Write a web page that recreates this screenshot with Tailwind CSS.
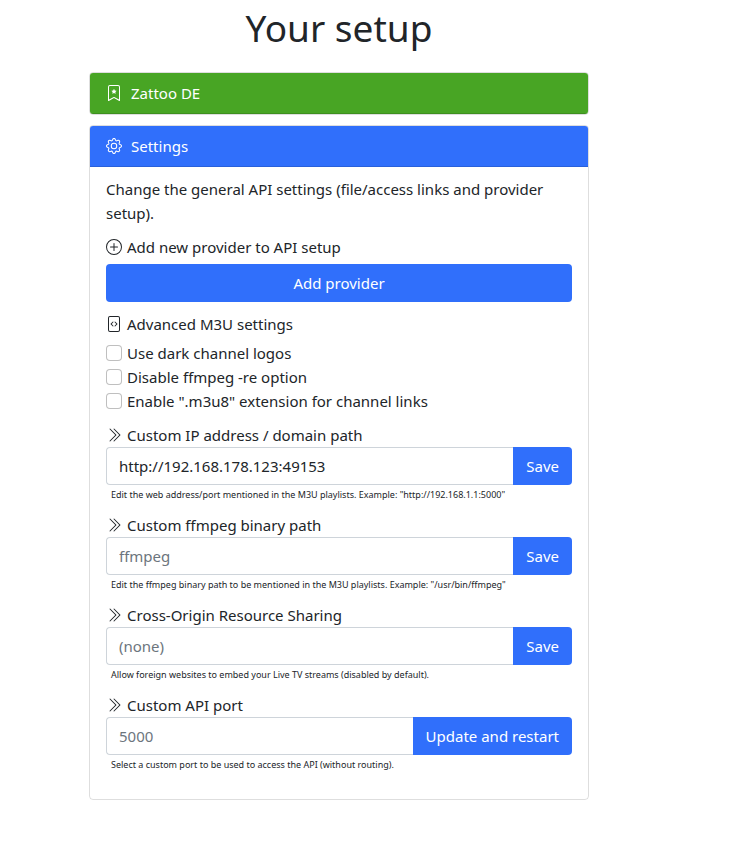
<!DOCTYPE html>
<html lang="en">
<head>
    <meta charset="UTF-8">
    <meta name="viewport" content="width=device-width, initial-scale=1.0">
    <title>Your setup</title>
    <script src="https://cdn.jsdelivr.net/npm/@tailwindcss/browser@4"></script>
</head>
<body class="bg-white pr-[53px] font-['Noto_Sans',sans-serif] text-[15px] leading-6 text-[#212529]">
    <main class="mx-auto max-w-[500px] pb-6">
        <h1 class="mb-5 pt-1 text-center text-[37px] leading-12">Your setup</h1>

        <!-- Provider -->
        <div class="mb-[10px] overflow-hidden rounded border border-black/13">
            <div class="flex items-center gap-[9px] border-b border-black/13 bg-[#48a524] px-4 py-2 text-white">
                <svg class="h-4 w-4" viewBox="0 0 16 16" fill="currentColor">
                    <path d="M7.84 4.1a.178.178 0 0 1 .32 0l.634 1.285a.178.178 0 0 0 .134.098l1.42.206c.145.021.204.2.098.303L9.42 6.993a.178.178 0 0 0-.051.158l.242 1.414a.178.178 0 0 1-.258.187l-1.27-.668a.178.178 0 0 0-.165 0l-1.27.668a.178.178 0 0 1-.257-.187l.242-1.414a.178.178 0 0 0-.05-.158l-1.03-1.001a.178.178 0 0 1 .098-.303l1.42-.206a.178.178 0 0 0 .134-.098L7.84 4.1z" />
                    <path d="M2 2a2 2 0 0 1 2-2h8a2 2 0 0 1 2 2v13.5a.5.5 0 0 1-.777.416L8 13.101l-5.223 2.815A.5.5 0 0 1 2 15.5V2zm2-1a1 1 0 0 0-1 1v12.566l4.723-2.482a.5.5 0 0 1 .554 0L13 14.566V2a1 1 0 0 0-1-1H4z" />
                </svg>
                <span>Zattoo DE</span>
            </div>
        </div>

        <!-- Settings -->
        <div class="overflow-hidden rounded border border-black/13">
            <div class="flex items-center gap-[9px] border-b border-black/13 bg-[#306ffb] px-4 py-2 text-white">
                <svg class="h-4 w-4" viewBox="0 0 16 16" fill="currentColor">
                    <path d="M8 4.754a3.246 3.246 0 1 0 0 6.492 3.246 3.246 0 0 0 0-6.492zM5.754 8a2.246 2.246 0 1 1 4.492 0 2.246 2.246 0 0 1-4.492 0z" />
                    <path d="M9.796 1.343c-.527-1.79-3.065-1.79-3.592 0l-.094.319a.873.873 0 0 1-1.255.52l-.292-.16c-1.64-.892-3.433.902-2.54 2.541l.159.292a.873.873 0 0 1-.52 1.255l-.319.094c-1.79.527-1.79 3.065 0 3.592l.319.094a.873.873 0 0 1 .52 1.255l-.16.292c-.892 1.64.901 3.434 2.541 2.54l.292-.159a.873.873 0 0 1 1.255.52l.094.319c.527 1.79 3.065 1.79 3.592 0l.094-.319a.873.873 0 0 1 1.255-.52l.292.16c1.64.893 3.434-.902 2.54-2.541l-.159-.292a.873.873 0 0 1 .52-1.255l.319-.094c1.79-.527 1.79-3.065 0-3.592l-.319-.094a.873.873 0 0 1-.52-1.255l.16-.292c.893-1.64-.902-3.433-2.541-2.54l-.292.159a.873.873 0 0 1-1.255-.52l-.094-.319zm-2.633.283c.246-.835 1.428-.835 1.674 0l.094.319a1.873 1.873 0 0 0 2.693 1.115l.291-.16c.764-.415 1.6.42 1.184 1.185l-.159.292a1.873 1.873 0 0 0 1.116 2.692l.318.094c.835.246.835 1.428 0 1.674l-.319.094a1.873 1.873 0 0 0-1.115 2.693l.16.291c.415.764-.42 1.6-1.185 1.184l-.291-.159a1.873 1.873 0 0 0-2.693 1.116l-.094.318c-.246.835-1.428.835-1.674 0l-.094-.319a1.873 1.873 0 0 0-2.692-1.115l-.292.16c-.764.415-1.6-.42-1.184-1.185l.159-.291A1.873 1.873 0 0 0 1.945 8.93l-.319-.094c-.835-.246-.835-1.428 0-1.674l.319-.094A1.873 1.873 0 0 0 3.06 4.377l-.16-.292c-.415-.764.42-1.6 1.185-1.184l.292.159a1.873 1.873 0 0 0 2.692-1.115l.094-.319z" />
                </svg>
                <span>Settings</span>
            </div>

            <div class="px-4 pt-[10px] pb-4">
                <p class="mb-[10px]">Change the general API settings (file/access links and provider setup).</p>

                <form class="mb-[10px]">
                    <div class="mb-[5px] flex items-center gap-[5px]">
                        <svg class="h-4 w-4" viewBox="0 0 16 16" fill="currentColor">
                            <path d="M8 15A7 7 0 1 1 8 1a7 7 0 0 1 0 14zm0 1A8 8 0 1 0 8 0a8 8 0 0 0 0 16z" />
                            <path d="M8 4a.5.5 0 0 1 .5.5v3h3a.5.5 0 0 1 0 1h-3v3a.5.5 0 0 1-1 0v-3h-3a.5.5 0 0 1 0-1h3v-3A.5.5 0 0 1 8 4z" />
                        </svg>
                        <span>Add new provider to API setup</span>
                    </div>
                    <button type="submit" class="w-full rounded bg-[#306ffb] px-3 py-[7px] text-white hover:bg-blue-700">Add provider</button>
                </form>

                <form class="mb-[10px]">
                    <div class="mb-[5px] flex items-center gap-[5px]">
                        <svg class="h-4 w-4" viewBox="0 0 16 16" fill="currentColor">
                            <path d="M6.646 5.646a.5.5 0 1 1 .708.708L5.707 8l1.647 1.646a.5.5 0 0 1-.708.708l-2-2a.5.5 0 0 1 0-.708l2-2zm2.708 0a.5.5 0 1 0-.708.708L10.293 8 8.646 9.646a.5.5 0 0 0 .708.708l2-2a.5.5 0 0 0 0-.708l-2-2z" />
                            <path d="M2 2a2 2 0 0 1 2-2h8a2 2 0 0 1 2 2v12a2 2 0 0 1-2 2H4a2 2 0 0 1-2-2V2zm10-1H4a1 1 0 0 0-1 1v12a1 1 0 0 0 1 1h8a1 1 0 0 0 1-1V2a1 1 0 0 0-1-1z" />
                        </svg>
                        <span>Advanced M3U settings</span>
                    </div>
                    <div class="flex items-center gap-[5px]">
                        <input type="checkbox" id="darkLogos" class="h-4 w-4 appearance-none rounded border border-black/25 bg-white checked:bg-[#306ffb]">
                        <label for="darkLogos">Use dark channel logos</label>
                    </div>
                    <div class="flex items-center gap-[5px]">
                        <input type="checkbox" id="disableRe" class="h-4 w-4 appearance-none rounded border border-black/25 bg-white checked:bg-[#306ffb]">
                        <label for="disableRe">Disable ffmpeg -re option</label>
                    </div>
                    <div class="flex items-center gap-[5px]">
                        <input type="checkbox" id="m3u8" class="h-4 w-4 appearance-none rounded border border-black/25 bg-white checked:bg-[#306ffb]">
                        <label for="m3u8">Enable ".m3u8" extension for channel links</label>
                    </div>
                </form>

                <form class="mb-2">
                    <label for="address" class="flex items-center gap-[5px]">
                        <svg class="h-4 w-4" viewBox="0 0 16 16" fill="currentColor">
                            <path d="M3.646 1.646a.5.5 0 0 1 .708 0l6 6a.5.5 0 0 1 0 .708l-6 6a.5.5 0 0 1-.708-.708L9.293 8 3.646 2.354a.5.5 0 0 1 0-.708z" />
                            <path d="M7.646 1.646a.5.5 0 0 1 .708 0l6 6a.5.5 0 0 1 0 .708l-6 6a.5.5 0 0 1-.708-.708L13.293 8 7.646 2.354a.5.5 0 0 1 0-.708z" />
                        </svg>
                        <span>Custom IP address / domain path</span>
                    </label>
                    <div class="flex">
                        <input type="text" id="address" value="http://192.168.178.123:49153" class="min-w-0 flex-1 rounded-l border border-r-0 border-[#ced4da] bg-white px-3 py-[6px] placeholder:text-[#6c757d]">
                        <button type="submit" class="rounded-r bg-[#306ffb] px-[13px] py-[7px] text-white hover:bg-blue-700">Save</button>
                    </div>
                    <p class="pl-[5px] text-[9px] leading-5">Edit the web address/port mentioned in the M3U playlists. Example: "http://192.168.1.1:5000"</p>
                </form>

                <form class="mb-2">
                    <label for="ffmpegPath" class="flex items-center gap-[5px]">
                        <svg class="h-4 w-4" viewBox="0 0 16 16" fill="currentColor">
                            <path d="M3.646 1.646a.5.5 0 0 1 .708 0l6 6a.5.5 0 0 1 0 .708l-6 6a.5.5 0 0 1-.708-.708L9.293 8 3.646 2.354a.5.5 0 0 1 0-.708z" />
                            <path d="M7.646 1.646a.5.5 0 0 1 .708 0l6 6a.5.5 0 0 1 0 .708l-6 6a.5.5 0 0 1-.708-.708L13.293 8 7.646 2.354a.5.5 0 0 1 0-.708z" />
                        </svg>
                        <span>Custom ffmpeg binary path</span>
                    </label>
                    <div class="flex">
                        <input type="text" id="ffmpegPath" placeholder="ffmpeg" class="min-w-0 flex-1 rounded-l border border-r-0 border-[#ced4da] bg-white px-3 py-[6px] placeholder:text-[#6c757d]">
                        <button type="submit" class="rounded-r bg-[#306ffb] px-[13px] py-[7px] text-white hover:bg-blue-700">Save</button>
                    </div>
                    <p class="pl-[5px] text-[9px] leading-5">Edit the ffmpeg binary path to be mentioned in the M3U playlists. Example: "/usr/bin/ffmpeg"</p>
                </form>

                <form class="mb-2">
                    <label for="cors" class="flex items-center gap-[5px]">
                        <svg class="h-4 w-4" viewBox="0 0 16 16" fill="currentColor">
                            <path d="M3.646 1.646a.5.5 0 0 1 .708 0l6 6a.5.5 0 0 1 0 .708l-6 6a.5.5 0 0 1-.708-.708L9.293 8 3.646 2.354a.5.5 0 0 1 0-.708z" />
                            <path d="M7.646 1.646a.5.5 0 0 1 .708 0l6 6a.5.5 0 0 1 0 .708l-6 6a.5.5 0 0 1-.708-.708L13.293 8 7.646 2.354a.5.5 0 0 1 0-.708z" />
                        </svg>
                        <span>Cross-Origin Resource Sharing</span>
                    </label>
                    <div class="flex">
                        <input type="text" id="cors" placeholder="(none)" class="min-w-0 flex-1 rounded-l border border-r-0 border-[#ced4da] bg-white px-3 py-[6px] placeholder:text-[#6c757d]">
                        <button type="submit" class="rounded-r bg-[#306ffb] px-[13px] py-[7px] text-white hover:bg-blue-700">Save</button>
                    </div>
                    <p class="pl-[5px] text-[9px] leading-5">Allow foreign websites to embed your Live TV streams (disabled by default).</p>
                </form>

                <form class="mb-2">
                    <label for="port" class="flex items-center gap-[5px]">
                        <svg class="h-4 w-4" viewBox="0 0 16 16" fill="currentColor">
                            <path d="M3.646 1.646a.5.5 0 0 1 .708 0l6 6a.5.5 0 0 1 0 .708l-6 6a.5.5 0 0 1-.708-.708L9.293 8 3.646 2.354a.5.5 0 0 1 0-.708z" />
                            <path d="M7.646 1.646a.5.5 0 0 1 .708 0l6 6a.5.5 0 0 1 0 .708l-6 6a.5.5 0 0 1-.708-.708L13.293 8 7.646 2.354a.5.5 0 0 1 0-.708z" />
                        </svg>
                        <span>Custom API port</span>
                    </label>
                    <div class="flex">
                        <input type="text" id="port" placeholder="5000" class="min-w-0 flex-1 rounded-l border border-r-0 border-[#ced4da] bg-white px-3 py-[6px] placeholder:text-[#6c757d]">
                        <button type="submit" class="rounded-r bg-[#306ffb] px-[13px] py-[7px] text-white hover:bg-blue-700">Update and restart</button>
                    </div>
                    <p class="pl-[5px] text-[9px] leading-5">Select a custom port to be used to access the API (without routing).</p>
                </form>
            </div>
        </div>
    </main>
</body>
</html>
